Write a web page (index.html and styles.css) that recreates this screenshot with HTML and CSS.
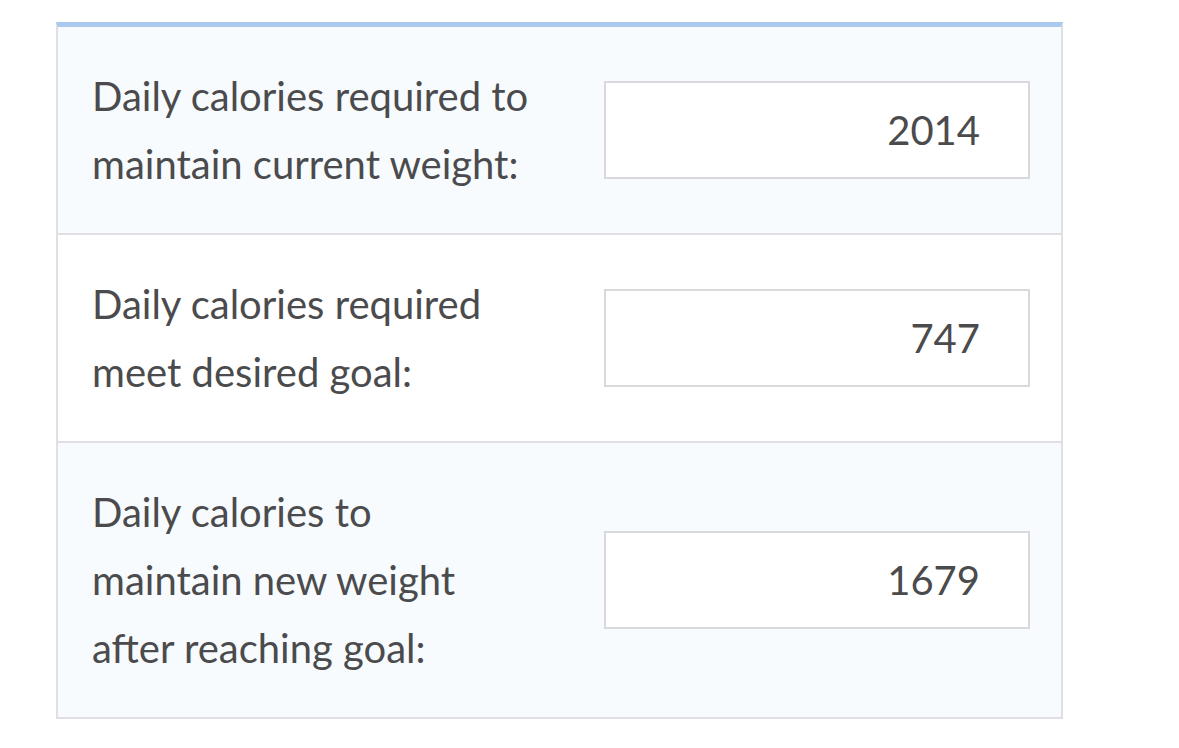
FILE: index.html
```html
<!DOCTYPE html>
<html lang="en">
<head>
    <meta charset="UTF-8">
    <title>Calorie Results</title>
    <meta name="viewport" content="width=device-width, initial-scale=1.0">
    <link rel="stylesheet" href="styles.css">
</head>
<body>
    <div id="results">
        <div class="result-row shaded">
            <label for="maintain">Daily calories required to<br>maintain current weight:</label>
            <input type="text" id="maintain" value="2014" readonly>
        </div>
        <div class="result-row">
            <label for="goal">Daily calories required<br>meet desired goal:</label>
            <input type="text" id="goal" value="747" readonly>
        </div>
        <div class="result-row shaded">
            <label for="after">Daily calories to<br>maintain new weight<br>after reaching goal:</label>
            <input type="text" id="after" value="1679" readonly>
        </div>
    </div>
</body>
</html>
```

FILE: styles.css
```css
body {
    margin: 0;
    padding: 22px 0 0 56px;
    font-family: 'Lato', 'Open Sans', sans-serif;
    background-color: #fff;
    color: #4b4b4d;
}
#results {
    width: 1003px;
    border: 2px solid #e0dfe3;
    border-top: 5px solid #a9c9ef;
}
.result-row {
    display: grid;
    grid-template-columns: 1fr 426px;
    align-items: center;
    padding: 35px 31px 35px 34px;
    background-color: #fff;
}
.result-row + .result-row { border-top: 2px solid #e0dfe3; }
.result-row.shaded { background-color: #f7fbfe; }
.result-row label {
    font-size: 40px;
    line-height: 68px;
}
.result-row input {
    box-sizing: border-box;
    width: 426px;
    height: 98px;
    border: 2px solid #d9d8dc;
    background: #fff;
    padding: 0 48px 0 10px;
    text-align: right;
    font-family: 'Lato', 'Open Sans', sans-serif;
    font-size: 40px;
    color: #4b4b4d;
    outline: none;
}
```
